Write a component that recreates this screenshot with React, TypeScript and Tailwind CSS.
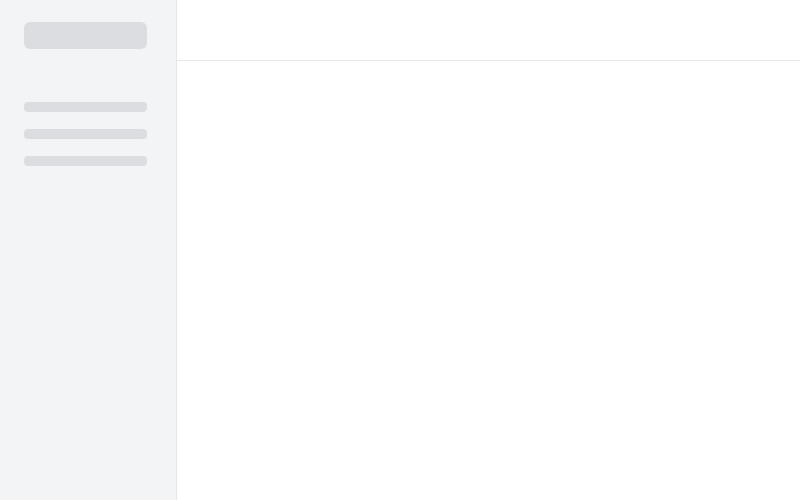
export default function App() {
  return (
    <div className="flex h-[500px] w-[800px] bg-white" style={{ fontFamily: "Inter, sans-serif" }}>
      <aside className="flex w-[177px] shrink-0 flex-col border-r border-[#e5e7eb] bg-[#f3f4f6] pl-6 pt-[22px]">
        <div className="h-[27px] w-[123px] rounded-md bg-[#dcdde0]" />
        <div className="mt-[53px] flex flex-col gap-[17px]">
          <div className="h-[10px] w-[123px] rounded-sm bg-[#dcdde0]" />
          <div className="h-[10px] w-[123px] rounded-sm bg-[#dcdde0]" />
          <div className="h-[10px] w-[123px] rounded-sm bg-[#dcdde0]" />
        </div>
      </aside>
      <main className="flex flex-1 flex-col">
        <header className="h-[61px] shrink-0 border-b border-[#e5e7eb] bg-white" />
        <div className="flex-1" />
      </main>
    </div>
  );
}
